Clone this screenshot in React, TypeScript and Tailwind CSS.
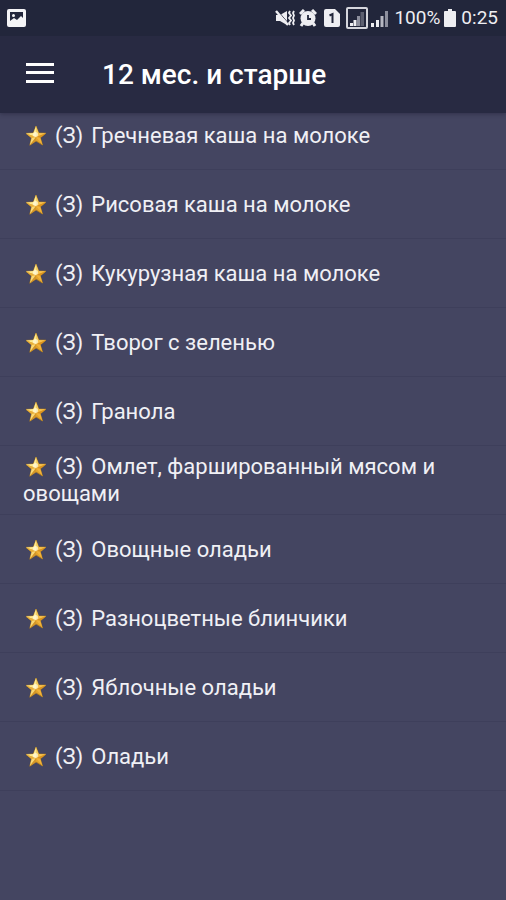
const recipes = [
  'Гречневая каша на молоке',
  'Рисовая каша на молоке',
  'Кукурузная каша на молоке',
  'Творог с зеленью',
  'Гранола',
  'Омлет, фаршированный мясом и овощами',
  'Овощные оладьи',
  'Разноцветные блинчики',
  'Яблочные оладьи',
  'Оладьи',
]

function StarIcon() {
  return (
    <svg viewBox="0 0 22 22" className="inline-block w-[22px] h-[22px] ml-0.5 mr-2 align-[-4px]" aria-hidden="true">
      <path d="M11 1 L13.7 8 L21 8.2 L15.3 12.8 L17.5 20 L11 16 L4.8 20.2 L6.6 12.9 L1 8.4 L8.4 8Z" fill="#e3a42c" stroke="#a97820" strokeWidth=".8" />
      <path d="M11 1 L11 12 L8.4 8Z M1 8.4 L11 12 L8.4 8Z" fill="#fde98f" />
      <path d="M11 1 L13.7 8 L11 12Z" fill="#f5cf62" />
      <path d="M1 8.4 L11 12 L6.6 12.9Z" fill="#e8b03c" />
      <path d="M21 8.2 L11 12 L13.7 8Z" fill="#f7c14d" />
      <path d="M21 8.2 L15.3 12.8 L11 12Z" fill="#dc9420" />
      <path d="M11 12 L6.6 12.9 L4.8 20.2Z" fill="#fbd974" />
      <path d="M11 12 L11 16 L4.8 20.2Z" fill="#d3962a" />
      <path d="M11 12 L15.3 12.8 L17.5 20Z" fill="#f3b43a" />
      <circle cx="10.5" cy="9.5" r="2.5" fill="#fffbe0" opacity=".7" />
    </svg>
  )
}

function StatusBar() {
  return (
    <div className="h-9 pl-[7px] pr-2 flex items-center bg-[#22263b] text-[#eeeef2]">
      <svg viewBox="0 0 20 18" className="w-5 h-[18px]" aria-hidden="true">
        <rect width="19" height="18" rx="2" fill="#f4f4f6" />
        <path d="M3 3h13v6l-2-2-4 4-3-2-4 3z" fill="#22263b" />
        <circle cx="6.5" cy="6.5" r="1.5" fill="#f4f4f6" />
      </svg>

      <div className="ml-auto flex items-center">
        {/* muted speaker with vibration waves */}
        <svg viewBox="0 0 20 18" className="w-5 h-[18px] mr-1" aria-hidden="true">
          <path d="M1 6h4l7-4v14l-7-4H1z" fill="currentColor" />
          <path d="M2 1l12 14" stroke="#22263b" strokeWidth="1" />
          <path d="M1 2l12 14" stroke="currentColor" strokeWidth="2.4" />
          <path d="M15 2l-1 2 2 2.5-2 2.500 2 2.5-2 2.5 1 2M19 2l-1 2 1 2.5-1 2.5 1 2.5-1 2.5 1 2" fill="none" stroke="currentColor" strokeWidth="1.8" />
        </svg>
        <svg viewBox="0 0 18 18" className="w-[18px] h-[18px] mr-[7px]" aria-hidden="true">
          <path d="M1 5l4-4M17 5l-4-4M4 14l-2 3M14 14l2 3" stroke="currentColor" strokeWidth="3" />
          <circle cx="9" cy="9.5" r="7.5" fill="currentColor" />
          <path d="M9 6v4h3" fill="none" stroke="#22263b" strokeWidth="1.8" />
        </svg>
        <svg viewBox="0 0 16 18" className="w-4 h-[18px] mr-[6px]" aria-hidden="true">
          <path d="M2 0h9l5 5v11q0 2-2 2H2q-2 0-2-2V2q0-2 2-2z" fill="currentColor" />
          <path d="M5.5 6.5L8.5 5v9" fill="none" stroke="#22263b" strokeWidth="2" />
        </svg>
        <svg viewBox="0 0 22 22" className="w-[22px] h-[22px] mr-[3px]" aria-hidden="true">
          <rect x="1" y="1" width="20" height="20" rx="1" fill="none" stroke="#d5d6dd" strokeWidth="2" />
          <path d="M4 16h3v3H4zM7.5 13h3v6h-3z" fill="currentColor" />
          <path d="M11 9h3v10h-3z" fill="#8d8f9d" />
          <path d="M14.5 5h3.500v14h-3.500z" fill="#5c5f70" />
        </svg>
        <svg viewBox="0 0 18 18" className="w-[18px] h-[18px] mr-[5px]" aria-hidden="true">
          <path d="M0 14h3v4H0zM5 11h3v7H5z" fill="currentColor" />
          <path d="M9.500 7h3v11h-3z" fill="#b6b7c1" />
          <path d="M14 2h3v16h-3z" fill="#8d8f9d" />
        </svg>
        <span className="text-[19px] leading-6">100%</span>
        <svg viewBox="0 0 12 18" className="w-3 h-[18px] ml-1 mr-[5px]" aria-hidden="true">
          <path d="M4 0h4v2h3q1 0 1 1v14q0 1-1 1H1q-1 0-1-1V3q0-1 1-1h3z" fill="currentColor" />
        </svg>
        <span className="text-[19px] leading-6">0:25</span>
      </div>
    </div>
  )
}

export default function App() {
  return (
    <div className="min-h-screen bg-[#444561] font-[Roboto,sans-serif] text-[#f0f0f5]">
      <header className="relative z-10 shadow-[0_1px_4px_rgba(20,20,40,0.4)]">
        <StatusBar />
        <div className="h-[77px] px-[26px] flex items-center gap-[48px] bg-[#282a42]">
          <button type="button" aria-label="Меню" className="w-7 h-5 mb-1 flex flex-col justify-between">
            <span className="h-[3px] w-full bg-white" />
            <span className="h-[3px] w-full bg-white" />
            <span className="h-[3px] w-full bg-white" />
          </button>
          <h1 className="text-[28px] leading-8 font-medium text-white">12 мес. и старше</h1>
        </div>
      </header>

      {/* list is scrolled slightly under the app bar */}
      <ul className="-mt-3">
        {recipes.map((name) => (
          <li
            key={name}
            className="min-h-[69px] px-[23px] py-1 flex items-center border-b border-[#3e3f5b] text-[22px] leading-[27px]"
          >
            <p>
              <StarIcon />
              <span className="mr-2">(З)</span>
              {name}
            </p>
          </li>
        ))}
      </ul>
    </div>
  )
}
